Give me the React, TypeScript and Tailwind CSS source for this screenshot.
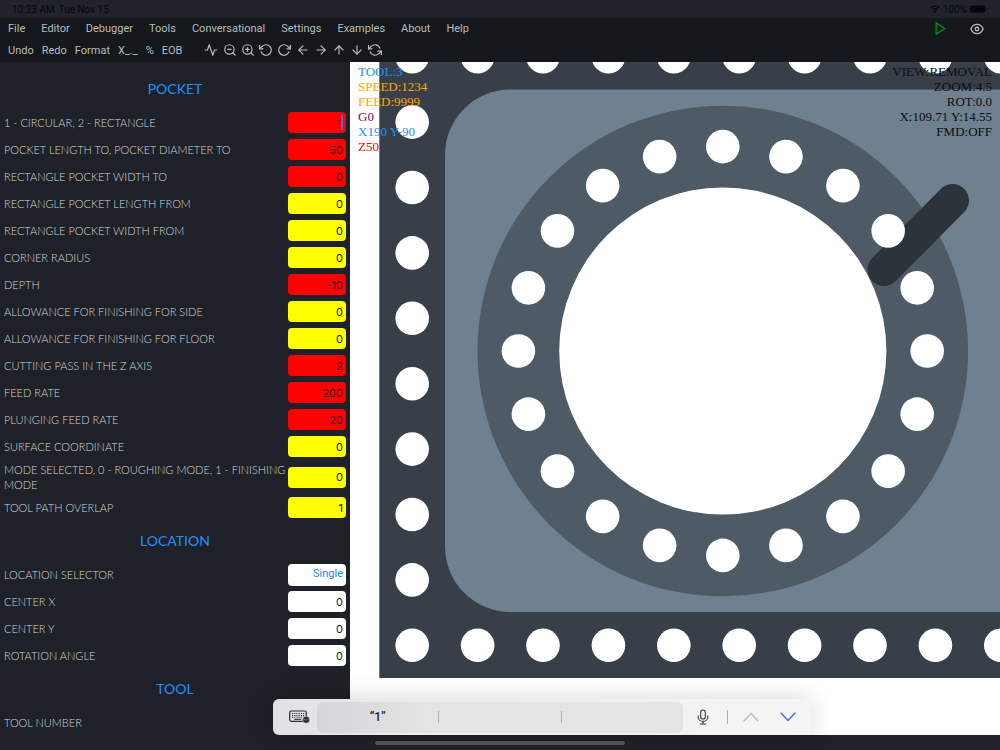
import { useState } from "react";
import {
  FiActivity,
  FiArrowDown,
  FiArrowLeft,
  FiArrowRight,
  FiArrowUp,
  FiPlay,
  FiRefreshCcw,
  FiRotateCcw,
  FiRotateCw,
  FiZoomIn,
  FiZoomOut,
} from "react-icons/fi";

const MENU = [
  "File",
  "Editor",
  "Debugger",
  "Tools",
  "Conversational",
  "Settings",
  "Examples",
  "About",
  "Help",
];

const ACTIONS = ["Undo", "Redo", "Format", "X_._", "%", "EOB"];

const TOOLS = [
  { label: "Plot", Icon: FiActivity },
  { label: "Zoom out", Icon: FiZoomOut },
  { label: "Zoom in", Icon: FiZoomIn },
  { label: "Rotate left", Icon: FiRotateCcw },
  { label: "Rotate right", Icon: FiRotateCw },
  { label: "Move left", Icon: FiArrowLeft },
  { label: "Move right", Icon: FiArrowRight },
  { label: "Move up", Icon: FiArrowUp },
  { label: "Move down", Icon: FiArrowDown },
  { label: "Reset", Icon: FiRefreshCcw },
];

type Tone = "red" | "yellow" | "white";

type FieldData = {
  id: string;
  label: string;
  value: string;
  tone: Tone;
  active?: boolean;
};

const TONES: Record<Tone, string> = {
  red: "bg-[#ff0000] text-[#3a0505]",
  yellow: "bg-[#ffff00] text-[#1c1c00]",
  white: "bg-white text-[#1c1c1e]",
};

const POCKET: FieldData[] = [
  { id: "shape", label: "1 - CIRCULAR, 2 - RECTANGLE", value: "1", tone: "red", active: true },
  { id: "lengthTo", label: "POCKET LENGTH TO, POCKET DIAMETER TO", value: "50", tone: "red" },
  { id: "widthTo", label: "RECTANGLE POCKET WIDTH TO", value: "0", tone: "red" },
  { id: "lengthFrom", label: "RECTANGLE POCKET LENGTH FROM", value: "0", tone: "yellow" },
  { id: "widthFrom", label: "RECTANGLE POCKET WIDTH FROM", value: "0", tone: "yellow" },
  { id: "radius", label: "CORNER RADIUS", value: "0", tone: "yellow" },
  { id: "depth", label: "DEPTH", value: "-10", tone: "red" },
  { id: "sideAllowance", label: "ALLOWANCE FOR FINISHING FOR SIDE", value: "0", tone: "yellow" },
  { id: "floorAllowance", label: "ALLOWANCE FOR FINISHING FOR FLOOR", value: "0", tone: "yellow" },
  { id: "cuttingPass", label: "CUTTING PASS IN THE Z AXIS", value: "2", tone: "red" },
  { id: "feedRate", label: "FEED RATE", value: "200", tone: "red" },
  { id: "plungeRate", label: "PLUNGING FEED RATE", value: "20", tone: "red" },
  { id: "surface", label: "SURFACE COORDINATE", value: "0", tone: "yellow" },
  {
    id: "mode",
    label: "MODE SELECTED, 0 - ROUGHING MODE, 1 - FINISHING MODE",
    value: "0",
    tone: "yellow",
  },
  { id: "overlap", label: "TOOL PATH OVERLAP", value: "1", tone: "yellow" },
];

const LOCATION: FieldData[] = [
  { id: "centerX", label: "CENTER X", value: "0", tone: "white" },
  { id: "centerY", label: "CENTER Y", value: "0", tone: "white" },
  { id: "rotation", label: "ROTATION ANGLE", value: "0", tone: "white" },
];

const ROW = "flex min-h-[27px] items-center justify-between pl-1 pr-1";
const LABEL =
  "flex-1 py-0.5 font-['Lato'] text-[11px] font-light leading-[15px] text-[#d6d8da]";

function SectionTitle({ children }: { children: string }) {
  return (
    <h2 className="flex h-10 items-center justify-center pb-0.5 font-['Lato'] text-[14px] text-[#1e90ff]">
      {children}
    </h2>
  );
}

function Field({ field }: { field: FieldData }) {
  const [value, setValue] = useState(field.value);

  return (
    <div className={ROW}>
      <label htmlFor={field.id} className={LABEL}>
        {field.label}
      </label>
      <div className="relative flex">
        <input
          id={field.id}
          type="text"
          value={value}
          onChange={(e) => setValue(e.target.value)}
          className={`h-[21px] w-[58px] rounded px-[3px] text-right font-['Inter'] text-[11px] outline-none ${TONES[field.tone]}`}
        />
        {field.active && (
          <span className="absolute right-[3px] top-[3px] h-[15px] w-0.5 rounded-full bg-[#3f6df5]" />
        )}
      </div>
    </div>
  );
}

function StatusBar() {
  return (
    <div className="flex h-[18px] shrink-0 items-center justify-between bg-[#20232b] pl-3 pr-3 text-[10px] text-[#060708]">
      <div className="flex gap-1">
        <span>10:23 AM</span>
        <span>Tue Nov 15</span>
      </div>
      <div className="flex items-center gap-[3px]">
        <svg width="10" height="8" viewBox="0 0 20 16" fill="none" stroke="currentColor">
          <path d="M1.5 5.5a12.5 12.5 0 0 1 17 0" strokeWidth="2.6" />
          <path d="M5 9.6a7.4 7.4 0 0 1 10 0" strokeWidth="2.6" />
          <path d="M10 15.5l-3-3.2a4.4 4.4 0 0 1 6 0z" fill="currentColor" stroke="none" />
        </svg>
        <span>100%</span>
        <svg width="18" height="8" viewBox="0 0 18 8" fill="currentColor">
          <rect x="0" y="0.5" width="15.5" height="7" rx="2" />
          <path d="M16.8 2.7c1 .4 1 2.2 0 2.6z" />
        </svg>
      </div>
    </div>
  );
}

function Header() {
  return (
    <header className="flex h-11 shrink-0 justify-between bg-[#14171b] pl-2 pr-4 text-[11px] text-[#b7bdb9]">
      <div>
        <nav className="flex h-[23px] items-center gap-4">
          {MENU.map((item) => (
            <button key={item} type="button" className="cursor-pointer">
              {item}
            </button>
          ))}
        </nav>
        <div className="flex h-[18px] items-center">
          <div className="flex gap-2 pt-0.5">
            {ACTIONS.map((item) => (
              <button key={item} type="button" className="cursor-pointer">
                {item}
              </button>
            ))}
          </div>
          <div className="ml-[22px] flex w-[178px] justify-between">
            {TOOLS.map(({ label, Icon }) => (
              <button key={label} type="button" aria-label={label} className="cursor-pointer">
                <Icon size={14} />
              </button>
            ))}
          </div>
        </div>
      </div>
      <div className="flex h-[21px] items-center gap-[22px]">
        <button type="button" aria-label="Run" className="cursor-pointer text-[#059305]">
          <FiPlay size={15} />
        </button>
        <button type="button" aria-label="View" className="cursor-pointer">
          <svg width="14" height="14" viewBox="0 0 24 24" fill="none" stroke="currentColor" strokeWidth="2.2">
            <path d="M1.5 12C3.6 6.8 7.5 4.2 12 4.2S20.4 6.8 22.5 12C20.4 17.2 16.5 19.8 12 19.8S3.6 17.2 1.5 12z" />
            <circle cx="12" cy="12" r="3" />
          </svg>
        </button>
      </div>
    </header>
  );
}

function Sidebar() {
  return (
    <aside className="w-[350px] shrink-0 overflow-hidden bg-[#1e2127] pt-[7px]">
      <SectionTitle>POCKET</SectionTitle>
      {POCKET.map((field) => (
        <Field key={field.id} field={field} />
      ))}
      <SectionTitle>LOCATION</SectionTitle>
      <div className={ROW}>
        <label htmlFor="selector" className={LABEL}>
          LOCATION SELECTOR
        </label>
        <select
          id="selector"
          className="h-[22px] w-[58px] appearance-none rounded bg-white px-[3px] text-[11px] text-[#1e84f5] outline-none [text-align-last:right]"
        >
          <option>Single</option>
        </select>
      </div>
      {LOCATION.map((field) => (
        <Field key={field.id} field={field} />
      ))}
      <SectionTitle>TOOL</SectionTitle>
      <Field field={{ id: "toolNumber", label: "TOOL NUMBER", value: "1", tone: "white" }} />
    </aside>
  );
}

const PITCH = 65.4;
const columnHoles = Array.from({ length: 10 }, (_, i) => ({ x: 62.2, y: 583.3 - i * PITCH }));
const rowHoles = Array.from({ length: 16 }, (_, i) => 62.2 + (i + 1) * PITCH).flatMap((x) => [
  { x, y: 583.3 },
  { x, y: -5.3 },
]);
const ringHoles = Array.from({ length: 20 }, (_, i) => {
  const angle = (i * Math.PI) / 10;
  return { x: 372.8 + 204.4 * Math.cos(angle), y: 289 + 204.4 * Math.sin(angle) };
});

function Preview() {
  return (
    <main className="relative min-w-0 flex-1 overflow-hidden bg-white font-['Liberation_Serif'] text-[13px] leading-[15px]">
      <svg
        className="absolute inset-0 h-full w-full"
        viewBox="0 0 650 673"
        preserveAspectRatio="xMinYMin slice"
      >
        <rect x="29.3" y="-40" width="1100" height="656" fill="#383f48" />
        <rect x="95" y="27.5" width="960" height="522.5" rx="65.4" fill="#6f8090" />
        <circle cx="372.8" cy="289" r="245.3" fill="#4e5a65" />
        <circle cx="372.8" cy="289" r="163.6" fill="#fff" />
        <path d="M534 207.5 602.5 138.5" stroke="#2d333b" strokeWidth="33" strokeLinecap="round" />
        {[...columnHoles, ...rowHoles, ...ringHoles].map((hole, i) => (
          <circle key={i} cx={hole.x} cy={hole.y} r="16.8" fill="#fff" />
        ))}
      </svg>
      <div className="relative flex justify-between pl-2 pr-2 pt-0.5">
        <div>
          <p className="text-[#1e90ff]">TOOL:3</p>
          <p className="text-[#ffa500]">SPEED:1234</p>
          <p className="text-[#ffa500]">FEED:9999</p>
          <p className="text-[#800080]">G0</p>
          <p className="text-[#1e90ff]">X190 Y-90</p>
          <p className="text-[#ff0000]">Z50</p>
        </div>
        <div className="text-right text-[#0c0d0f]">
          <p>VIEW:REMOVAL</p>
          <p>ZOOM:4.5</p>
          <p>ROT:0.0</p>
          <p>X:109.71 Y:14.55</p>
          <p>FMD:OFF</p>
        </div>
      </div>
    </main>
  );
}

function KeyboardIcon() {
  return (
    <svg width="21" height="14" viewBox="0 0 21 14" fill="none" stroke="#2c2c2e">
      <rect x="0.7" y="1" width="16.6" height="10.4" rx="1.8" strokeWidth="1.2" />
      <path d="M3 3.5h12.5M3 5.5h12.5M3 7.3h12.5" strokeWidth="1.1" strokeDasharray="1.2 1" />
      <path d="M5.2 9.3h7" strokeWidth="1.1" />
      <circle cx="17.2" cy="9.8" r="3.5" fill="#2c2c2e" stroke="#dcdddf" strokeWidth="0.6" />
      <path d="M15 9.8h4.6" stroke="#b5b5b5" strokeWidth="0.8" strokeDasharray="0.9 0.9" />
    </svg>
  );
}

function SuggestionBar() {
  return (
    <div className="absolute bottom-[15px] left-[273px] flex h-9 w-[538px] items-center rounded-md bg-linear-to-r from-[#dfe1e3] via-[#ececec] via-25% to-[#f5f5f5] pl-4 text-[#1c1c1e] shadow-[0_0_24px_rgba(0,0,0,0.16)]">
      <button type="button" aria-label="Keyboard" className="w-7">
        <KeyboardIcon />
      </button>
      <div className="flex h-[31px] w-[366px] items-center rounded-md bg-linear-to-r from-[#d5d6d9] via-[#e4e4e4] via-30% to-[#e4e4e4]">
        <button type="button" className="flex-1 text-[12px] font-medium">
          “1”
        </button>
        <span className="h-3 w-px bg-[#b0b0b0]" />
        <button type="button" aria-label="Second suggestion" className="h-full flex-1" />
        <span className="h-3 w-px bg-[#b0b0b0]" />
        <button type="button" aria-label="Third suggestion" className="h-full flex-1" />
      </div>
      <div className="flex flex-1 items-center">
        <button type="button" aria-label="Dictate" className="ml-[14px]">
          <svg width="12" height="16" viewBox="0 0 12 16" fill="none" stroke="#3a3a3c" strokeWidth="1.1" strokeLinecap="round">
            <rect x="3.7" y="1" width="4.6" height="9" rx="2.3" />
            <path d="M1.2 6.8v1.4a4.8 4.2 0 0 0 9.6 0V6.8M6 12.4v2.5M3.3 15h5.4" />
          </svg>
        </button>
        <span className="ml-[18px] h-[14px] w-px bg-[#b0b0b0]" />
        <button type="button" aria-label="Previous field" className="ml-[15px]">
          <svg width="16" height="10" viewBox="0 0 16 10" fill="none" stroke="#b9b9b9" strokeWidth="1.2" strokeLinecap="round">
            <path d="M1 9 8 1.5 15 9" />
          </svg>
        </button>
        <button type="button" aria-label="Next field" className="ml-[21px]">
          <svg width="16" height="10" viewBox="0 0 16 10" fill="none" stroke="#3f6df5" strokeWidth="1.4" strokeLinecap="round">
            <path d="M1 1 8 8.5 15 1" />
          </svg>
        </button>
      </div>
    </div>
  );
}

export default function App() {
  return (
    <div className="relative flex h-screen flex-col overflow-hidden bg-[#1e2127] font-['Roboto',sans-serif]">
      <StatusBar />
      <Header />
      <div className="flex min-h-0 flex-1">
        <Sidebar />
        <Preview />
      </div>
      <div className="flex h-[15px] shrink-0 items-center justify-center">
        <div className="h-1 w-1/4 rounded-full bg-[#565656]" />
      </div>
      <SuggestionBar />
    </div>
  );
}
